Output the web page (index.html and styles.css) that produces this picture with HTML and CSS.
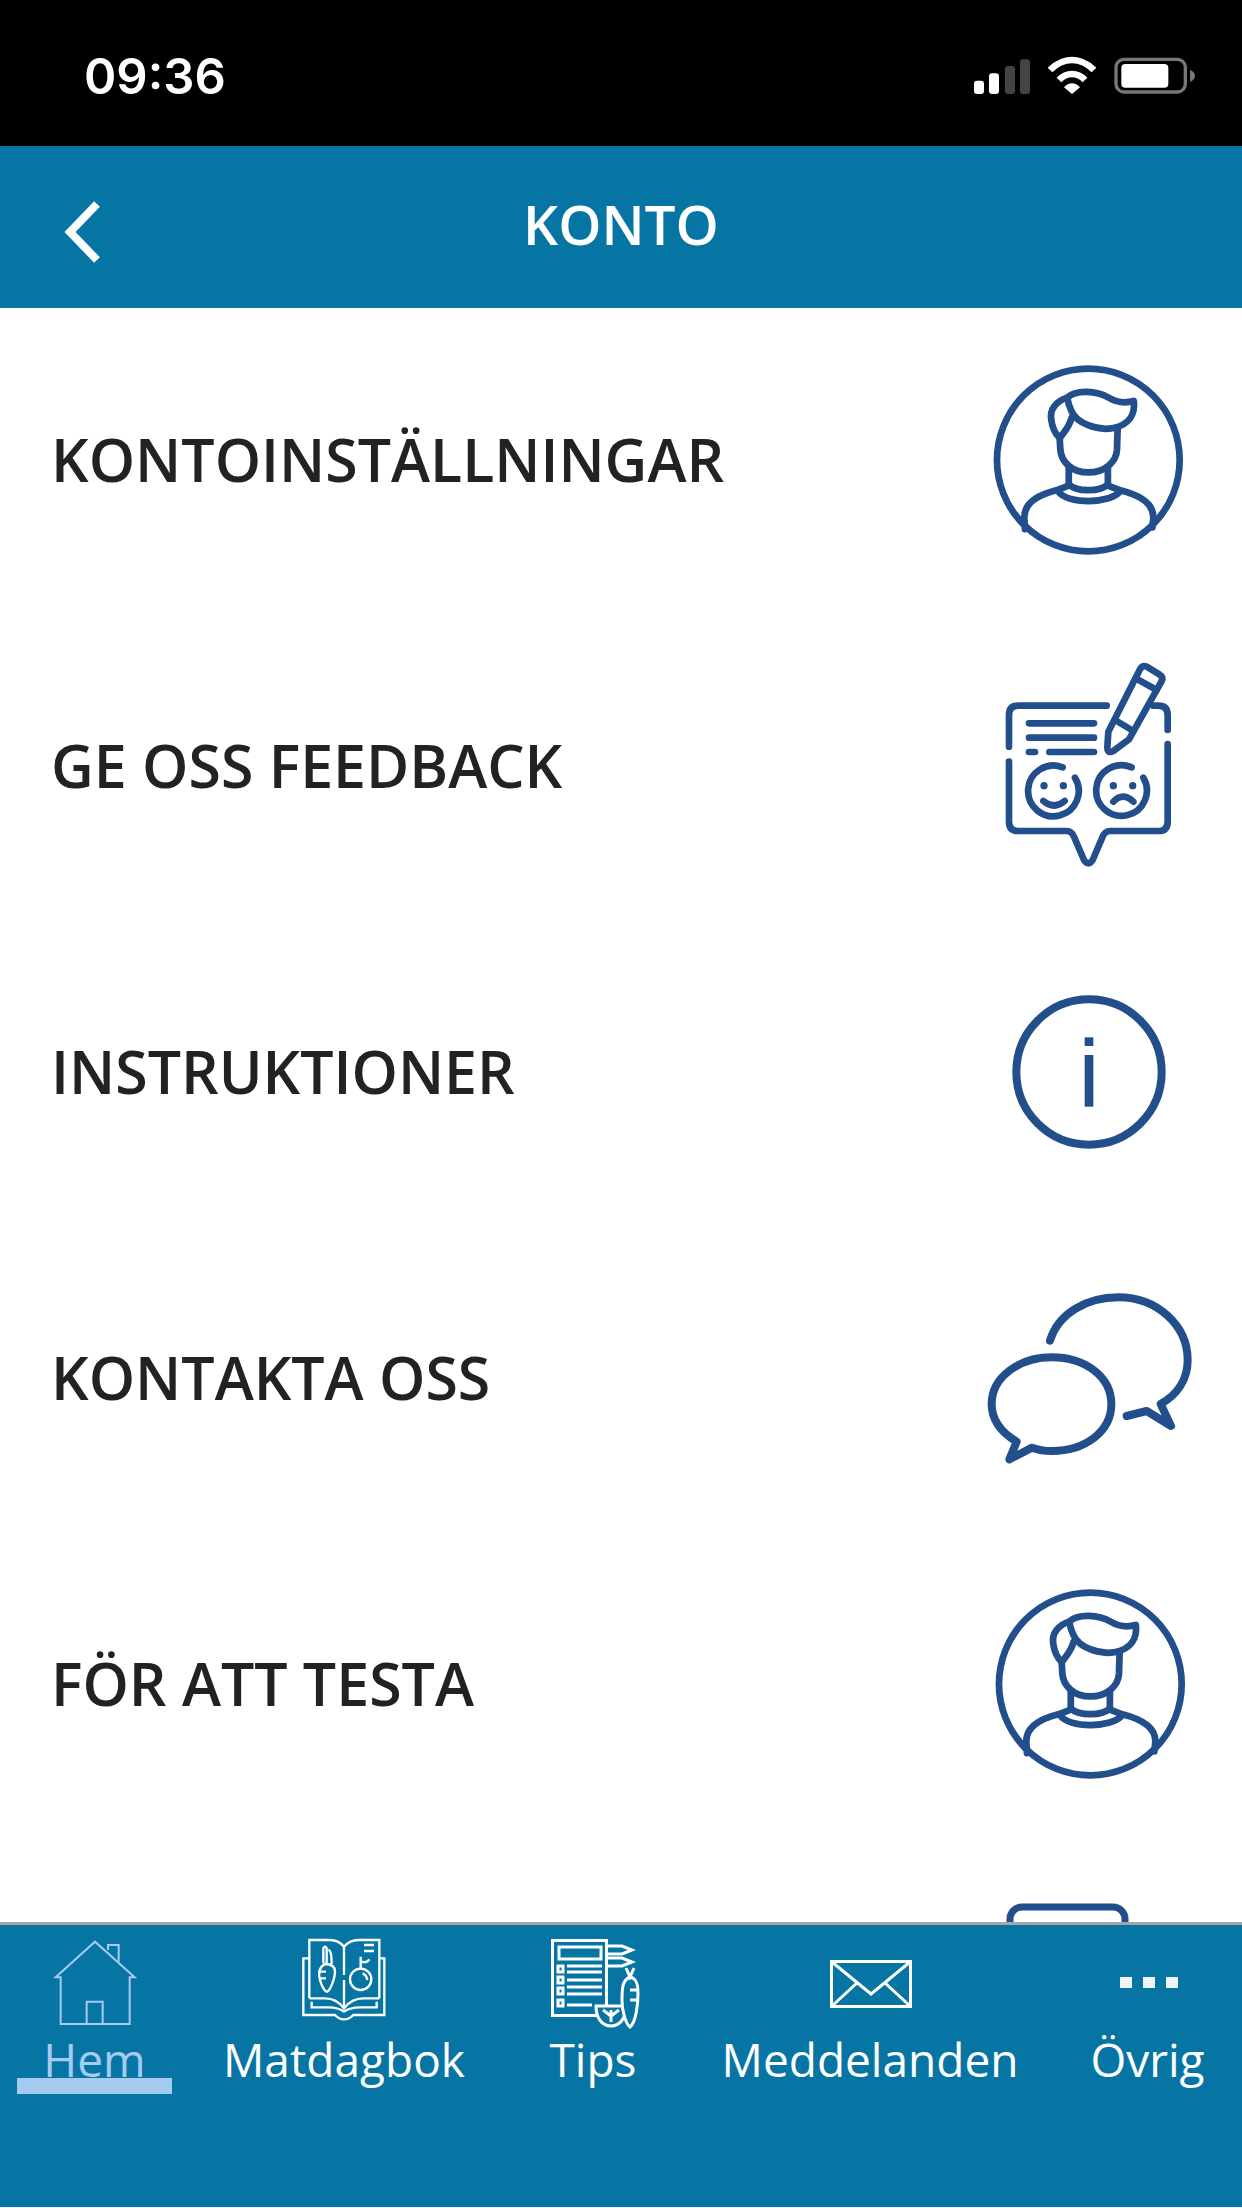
FILE: index.html
```html
<!DOCTYPE html>
<html lang="sv">
<head>
    <meta charset="utf-8">
    <meta name="viewport" content="width=device-width, initial-scale=1.0">
    <title>Konto</title>
    <link rel="stylesheet" href="styles.css">
</head>
<body>
    <svg class="defs" width="0" height="0">
        <symbol id="ico-person" viewBox="31 4 712 712">
            <circle cx="385" cy="360" r="271"/>
            <path d="M322 175C350 150 410 155 445 175C470 190 495 192 520 185C525 225 505 255 460 265C410 275 350 250 335 215C328 200 325 190 322 175Z"/>
            <path d="M322 175C290 185 270 210 275 240C278 265 290 285 300 295C315 275 330 260 335 235"/>
            <path d="M300 295L302 330C305 365 335 397 385 397C435 397 468 365 470 330L472 265"/>
            <path d="M327 385V435M443 385V435M327 432C350 455 420 455 443 432"/>
            <path d="M295 452C320 492 450 492 480 452"/>
            <path d="M197 565L195 530C195 490 230 465 290 450L327 436M443 436L480 450C540 465 578 490 578 530L575 560"/>
        </symbol>
    </svg>

    <div class="status-bar">
        <span class="time">09:36</span>
        <svg class="status-icons" width="240" height="70" viewBox="0 0 720 210">
            <rect x="42" y="122" width="30" height="40" rx="9" fill="#fff"/>
            <rect x="87" y="100" width="30" height="62" rx="9" fill="#fff"/>
            <rect x="135" y="78" width="30" height="84" rx="9" fill="#444"/>
            <rect x="180" y="58" width="30" height="104" rx="9" fill="#444"/>
            <path d="M270 90C310 50 362 50 402 90" fill="none" stroke="#fff" stroke-width="20"/>
            <path d="M297 120C320 96 352 96 375 120" fill="none" stroke="#fff" stroke-width="20"/>
            <path d="M312 142C326 126 346 126 360 142L336 162Z" fill="#fff"/>
            <rect x="468" y="58" width="208" height="98" rx="24" fill="none" stroke="#777" stroke-width="10"/>
            <rect x="484" y="72" width="141" height="71" rx="12" fill="#fff"/>
            <path d="M690 90Q705 96 705 107Q705 119 690 125Z" fill="#777"/>
        </svg>
    </div>

    <header class="top-bar">
        <svg class="back" width="50" height="70" viewBox="0 0 50 70">
            <path d="M37 7L10 35L37 63"/>
        </svg>
        <h1>KONTO</h1>
    </header>

    <main class="menu">
        <div class="menu-row">
            <span>KONTOINSTÄLLNINGAR</span>
            <svg class="menu-icon"><use href="#ico-person"/></svg>
        </div>
        <div class="menu-row">
            <span>GE OSS FEEDBACK</span>
            <svg class="menu-icon" viewBox="-33 -12 720 720">
                <path d="M380 167H115Q87 167 87 195V290M87 335V515Q87 543 115 543H260Q275 543 282 560L312 630Q325 650 338 630L368 560Q375 543 390 543H535Q563 543 563 515V282M563 240V195Q563 167 535 167H520"/>
                <path d="M147 220H342M147 263H342M147 306H165M208 306H342"/>
                <path d="M248 352A76 76 0 1 0 285 383M190 453Q222 480 254 453"/>
                <path d="M455 352A76 76 0 1 0 490 383M400 455Q428 425 460 455"/>
                <path d="M480 58Q487 45 500 50L538 73Q552 82 544 95L447 268L400 303Q382 312 382 292L385 245Z"/>
                <path d="M467 85L530 120M410 213L455 240"/>
                <g class="solid">
                    <circle cx="192" cy="407" r="11"/>
                    <circle cx="250" cy="407" r="11"/>
                    <circle cx="400" cy="407" r="11"/>
                    <circle cx="458" cy="407" r="11"/>
                </g>
            </svg>
        </div>
        <div class="menu-row">
            <span>INSTRUKTIONER</span>
            <svg class="menu-icon thick" viewBox="-3 -84 720 720">
                <circle cx="357" cy="276" r="218"/>
                <g class="solid">
                    <rect x="344" y="172" width="26" height="26"/>
                    <rect x="344" y="225" width="26" height="155"/>
                </g>
            </svg>
        </div>
        <div class="menu-row">
            <span>KONTAKTA OSS</span>
            <svg class="menu-icon thick" viewBox="-3 834 720 720">
                <path d="M240 1082C265 1000 350 952 445 952C560 952 653 1035 653 1140C653 1200 620 1245 572 1272L603 1338L530 1293L470 1308"/>
                <path d="M186 1403L118 1438L140 1385C90 1355 65 1320 65 1272C65 1190 150 1132 245 1132C345 1132 424 1190 424 1272C424 1355 345 1413 245 1413C225 1413 205 1410 186 1403Z"/>
            </svg>
        </div>
        <div class="menu-row">
            <span>FÖR ATT TESTA</span>
            <svg class="menu-icon nudge"><use href="#ico-person"/></svg>
        </div>
        <div class="menu-row">
            <span></span>
            <svg class="menu-icon" viewBox="0 0 240 240">
                <rect class="doc" x="41" y="37" width="115" height="240" rx="12"/>
            </svg>
        </div>
    </main>

    <nav class="tab-bar">
        <div class="tab active">
            <svg class="tab-icon" viewBox="139 132 288 288">
                <path d="M165 262L283 155L402 262H387V402H180V262Z"/>
                <path d="M322 180V165H354V215M258 402V335H306V402"/>
            </svg>
            <span>Hem</span>
        </div>
        <div class="tab">
            <svg class="tab-icon heavy" viewBox="888 132 288 288">
                <path d="M928 325V150H990Q1015 150 1032 170Q1050 150 1075 150H1138V325"/>
                <path d="M1032 170V255M1032 270V350"/>
                <path d="M928 325H975Q1010 325 1032 355Q1055 325 1090 325H1138"/>
                <path d="M928 205H910V375H1005Q1020 390 1032 388Q1045 390 1060 375H1153V205H1138"/>
                <path d="M935 335V352H985Q1015 352 1032 365Q1050 352 1080 352H1130V335"/>
                <path d="M975 222C955 232 955 250 960 270C965 290 975 305 982 305C992 300 1005 262 1005 245C1005 230 995 222 975 222Z"/>
                <path d="M970 220V175Q975 165 980 175V220M985 180Q995 180 995 222M958 245H978M962 265H978"/>
                <circle cx="1082" cy="268" r="32"/>
                <path d="M1082 236V200M1084 215Q1100 220 1108 208M1092 165H1122M1092 183H1122M1088 250Q1100 255 1102 270"/>
            </svg>
            <span>Matdagbok</span>
        </div>
        <div class="tab">
            <svg class="tab-icon" viewBox="545 1934 96 96">
                <g class="fine">
                    <rect x="552.5" y="1940.5" width="54" height="75"/>
                    <rect x="559" y="1947" width="42" height="12"/>
                    <path d="M558 1966h5v6h-5zM558 1977h5v6h-5zM558 1988h5v6h-5zM558 2000h5v6h-5z"/>
                    <path d="M567 1966H602M567 1972H602M567 1980H602M567 1987H602M567 1994H602M567 2005H592"/>
                    <path d="M607 1946H622L632 1950L622 1954H607M607 1958H622L632 1962L622 1966H607"/>
                    <path class="patch" d="M596 2006H626C626 2018 620 2026 611 2026C602 2026 596 2018 596 2006Z"/>
                    <path d="M611 2010V2022M603 2010L611 2016L619 2010"/>
                    <path class="patch" d="M630 1977C622 1980 622 1990 622 2000C622 2012 626 2024 630 2027C636 2022 638 2005 638 1993C638 1983 636 1978 630 1977Z"/>
                    <path d="M626 1968L630 1977L634 1968M630 1990H637M630 2000H637"/>
                </g>
            </svg>
            <span>Tips</span>
        </div>
        <div class="tab">
            <svg class="tab-icon" viewBox="822 1934 96 96">
                <g class="fine">
                    <rect x="831.5" y="1961.5" width="79" height="45"/>
                    <path d="M832 1962L871 1994L910 1962M832 2006L858 1982M910 2006L884 1982"/>
                </g>
            </svg>
            <span>Meddelanden</span>
        </div>
        <div class="tab">
            <svg class="tab-icon" viewBox="1099 1934 96 96">
                <g class="dots">
                    <rect x="1119" y="1977" width="12" height="11"/>
                    <rect x="1142" y="1977" width="12" height="11"/>
                    <rect x="1165" y="1977" width="12" height="11"/>
                </g>
            </svg>
            <span>Övrig</span>
        </div>
    </nav>
</body>
</html>
```

FILE: styles.css
```css
body {
    font-family: 'Open Sans', sans-serif;
    margin: 0;
    padding: 0;
    height: 2208px;
    display: flex;
    flex-direction: column;
    overflow: hidden;
    background-color: #fff;
}
.defs {
    display: none;
}
.status-bar {
    height: 146px;
    flex: none;
    box-sizing: border-box;
    padding: 40px 42px 0 84px;
    background-color: #000;
    display: flex;
    justify-content: space-between;
    align-items: flex-start;
}
.time {
    font-family: 'Inter', sans-serif;
    font-weight: 600;
    font-size: 49px;
    line-height: 73px;
    color: #fff;
}
.top-bar {
    height: 162px;
    flex: none;
    background-color: #0775a4;
    color: #fff;
    display: grid;
    grid-template-columns: 1fr auto 1fr;
    align-items: center;
}
.top-bar h1 {
    grid-column: 2;
    grid-row: 1;
    margin: 0 0 7px;
    font-size: 55px;
    font-weight: 600;
    line-height: 1;
}
.back {
    grid-column: 1;
    grid-row: 1;
    margin: 10px 0 0 60px;
    fill: none;
    stroke: #fff;
    stroke-width: 8;
}
.menu {
    flex: 1;
    min-height: 0;
    overflow: hidden;
}
.menu-row {
    height: 306px;
    box-sizing: border-box;
    padding: 0 33px 2px 51px;
    display: flex;
    justify-content: space-between;
    align-items: center;
    font-size: 59px;
    font-weight: 600;
    color: #222;
}
.menu-row span {
    margin-bottom: 2px;
}
.menu-icon {
    width: 240px;
    height: 240px;
    flex: none;
    fill: none;
    stroke: #234e8c;
    stroke-width: 20;
    stroke-linecap: round;
    stroke-linejoin: round;
    overflow: visible;
}
.menu-icon.thick {
    stroke-width: 24;
}
.menu-icon.nudge {
    margin-right: -2px;
}
.menu-icon .solid {
    fill: #234e8c;
    stroke: none;
}
.menu-icon .doc {
    stroke-width: 7;
}
.tab-bar {
    height: 286px;
    flex: none;
    box-sizing: border-box;
    border-top: 3px solid #a6a6a6;
    border-bottom: 1px solid #fff;
    padding-top: 9px;
    background-color: #0775a4;
    display: grid;
    grid-template-columns: 189px 310px 188px 366px 189px;
    align-items: start;
}
.tab {
    position: relative;
    display: flex;
    flex-direction: column;
    align-items: center;
    font-size: 46px;
    line-height: 58px;
    color: #fff;
}
.tab.active {
    color: #a5cbf1;
}
.tab.active::after {
    content: "";
    position: absolute;
    left: 17px;
    right: 17px;
    bottom: -6px;
    height: 16px;
    background-color: #a5cbf1;
}
.tab-icon {
    width: 96px;
    height: 96px;
    fill: none;
    stroke: currentColor;
    stroke-width: 6;
}
.tab-icon.heavy {
    stroke-width: 7;
}
.tab-icon .fine {
    stroke-width: 3;
}
.tab-icon .patch {
    fill: #0775a4;
}
.tab-icon .dots {
    fill: #eef4f8;
    stroke: none;
}
```
